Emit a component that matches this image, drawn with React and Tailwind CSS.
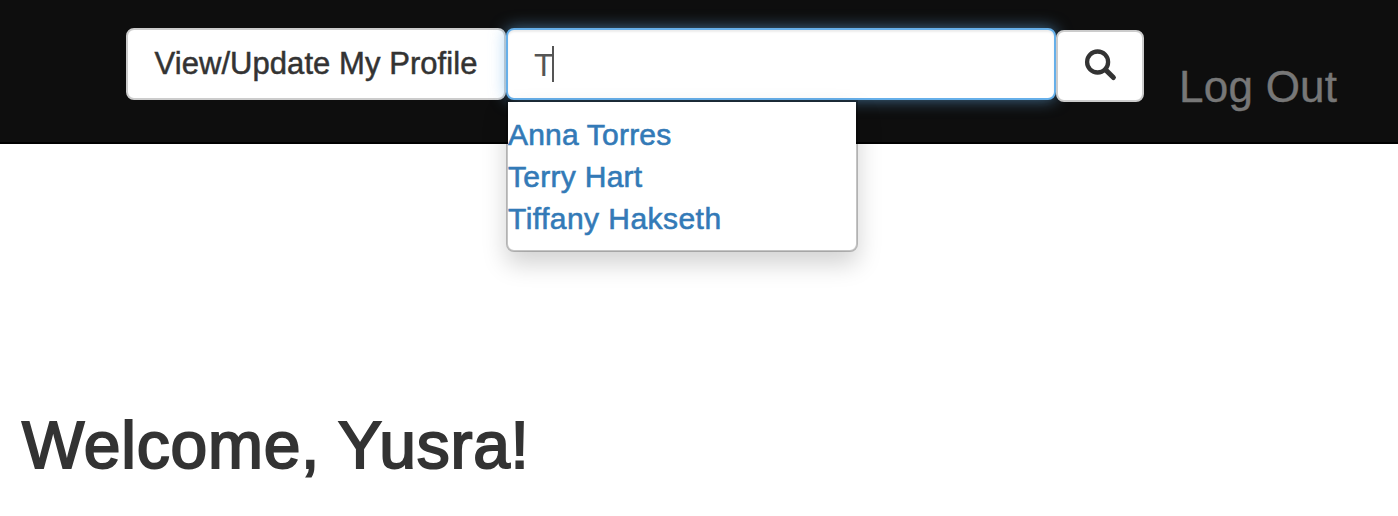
import React from "react";

const people = [
  { name: "Anna Torres", tracking: "tracking-[0.2px]" },
  { name: "Terry Hart", tracking: "tracking-[0.28px]" },
  { name: "Tiffany Hakseth", tracking: "tracking-[0.45px]" },
];

function SearchIcon() {
  return (
    <svg className="h-8 w-8 overflow-visible" viewBox="0 0 32 32" fill="none" stroke="#333333">
      <circle cx="13.6" cy="12" r="10.5" strokeWidth="4.3" />
      <path d="M21.4 19.6 L29.4 27.5" strokeWidth="5" strokeLinecap="round" />
    </svg>
  );
}

function Suggestions() {
  return (
    <ul className="absolute top-full left-0 z-10 w-[352px] rounded-b-lg border-2 border-black/23 bg-white bg-clip-padding pt-[12px] pb-[10px] shadow-[0_12px_24px_rgba(0,0,0,0.175)]">
      {people.map(({ name, tracking }) => (
        <li key={name} className={`h-[42px] whitespace-nowrap text-[30px] leading-[42px] text-[#337ab7] [-webkit-text-stroke:0.6px_#337ab7] ${tracking}`}>
          <a href="#">{name}</a>
        </li>
      ))}
    </ul>
  );
}

export default function App() {
  return (
    <div className="h-[516px] overflow-hidden bg-white font-['Liberation_Sans',Arial,sans-serif]">
      <header className="flex h-36 items-start border-b-2 border-black bg-[#0e0e0e] pt-7 pl-[126px]">
        <button className="h-[72px] w-[380px] rounded-lg border-2 border-[#cccccc] bg-white text-[31px] tracking-[0.06px] whitespace-nowrap text-[#333333] [-webkit-text-stroke:0.5px_#333333]">
          View/Update My Profile
        </button>
        <div className="relative h-[72px] w-[550px]">
          <div className="flex h-[72px] items-center rounded-lg border-2 border-[#66afe9] bg-white pl-[26px] text-[32px] text-[#555555] shadow-[inset_0_2px_2px_rgba(0,0,0,0.075),0_0_16px_rgba(102,175,233,0.6)]">
            <span className="w-[18px] pt-[2px]">T</span>
            <span className="h-9 w-[2px] bg-[#555555]" />
          </div>
          <Suggestions />
        </div>
        <button aria-label="Search" className="relative mt-[2px] flex h-[72px] w-[88px] items-center justify-center rounded-lg border-2 border-[#cccccc] bg-white">
          <SearchIcon />
        </button>
        <a href="#" className="mt-[31px] ml-[35px] text-[44px] leading-[56px] tracking-[0.25px] whitespace-nowrap text-[#777777] [-webkit-text-stroke:0.4px_#777777]">
          Log Out
        </a>
      </header>
      <h1 className="mt-[263px] ml-[22px] text-[66px] leading-[76px] tracking-[0.75px] whitespace-nowrap text-[#333333] [-webkit-text-stroke:2px_#333333]">
        Welcome, Yusra!
      </h1>
    </div>
  );
}
